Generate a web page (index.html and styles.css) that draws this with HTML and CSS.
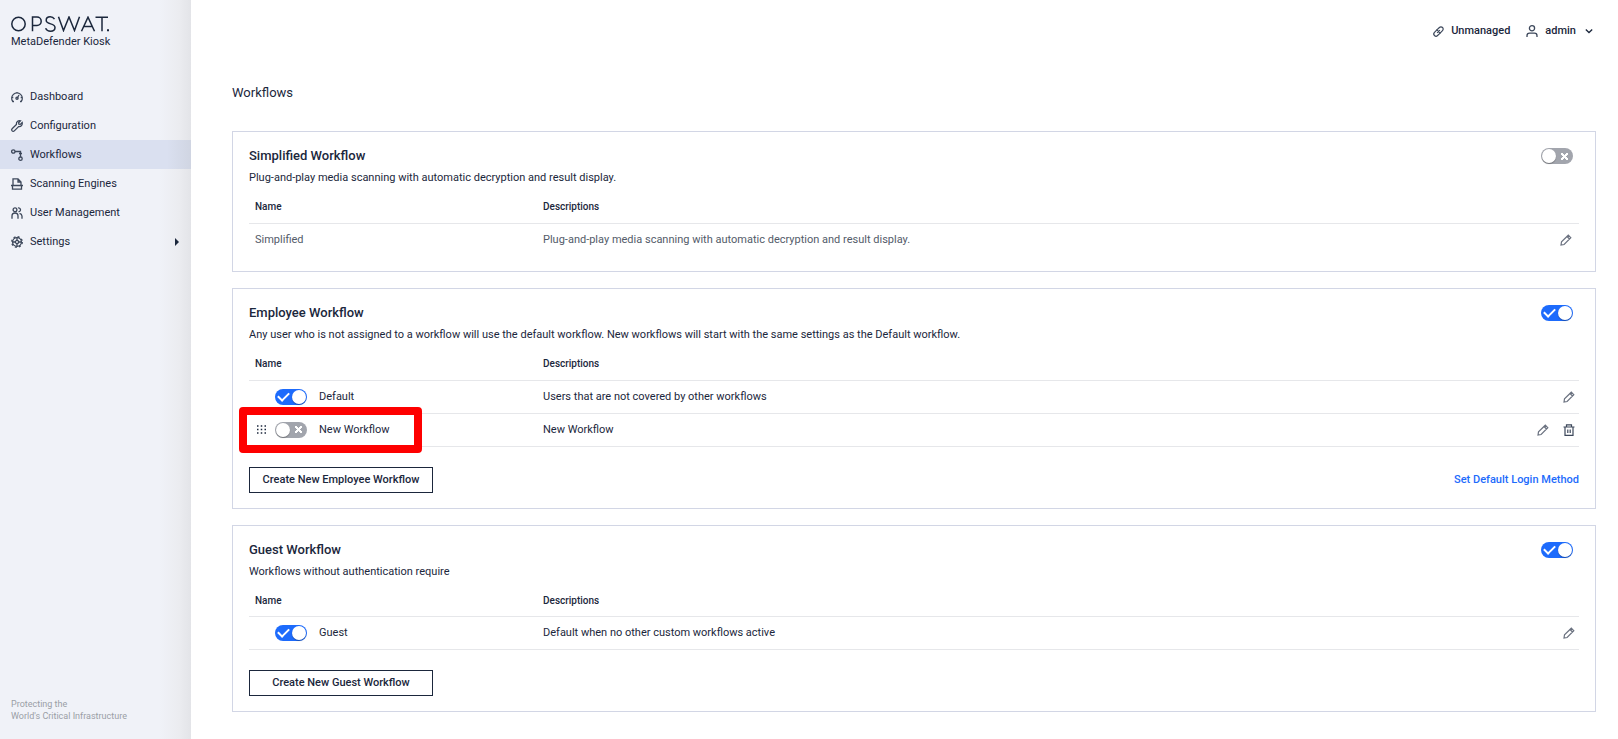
FILE: index.html
```
<!DOCTYPE html>
<html lang="en">
<head>
  <meta charset="UTF-8">
  <title>MetaDefender Kiosk - Workflows</title>
  <link rel="stylesheet" href="styles.css">
</head>
<body>

<!-- shared icons -->
<svg class="sprite" aria-hidden="true">
  <symbol id="i-edit" viewBox="0 0 12 12">
    <path d="M1 11l.5-3.200L8.300 1.200l2.500 2.500L4.100 10.500zM7 2.500L9.500 5"/>
  </symbol>
  <symbol id="i-trash" viewBox="0 0 12 12">
    <path d="M.5 3h11M3.500 3V.800h5V3M2 3v8.400h8V3M4.800 5.500v3.600M7.200 5.500v3.600"/>
  </symbol>
</svg>

<div class="layout">
  <aside class="sidebar">
    <div class="brand">
      <svg class="logo" viewBox="0 0 98 16" role="img" aria-label="OPSWAT.">
        <circle cx="7.500" cy="8" r="6.700"/>
        <path d="M21.500 15.300V1h4.500a4.200 4.200 0 0 1 0 8.400h-4.500"/>
        <path d="M43.500 3.200C42.500 1.600 41 .8 39.200.8c-2.400 0-4 1.400-4 3.400 0 4.800 8.800 2.600 8.800 7.300 0 2.300-1.900 3.700-4.500 3.700-2.100 0-4-1-4.900-3"/>
        <path d="M47.500.7l5 13.800L58 1l5.500 13.500L68.500.7"/>
        <path d="M70.500 15.300L77 1.200l6.500 14.100M73 10.500h8"/>
        <path d="M84.500 1.200H97M91 1.200v14.100"/>
        <path d="M96 14.300h2" stroke-width="2"/>
      </svg>
      <div class="product">MetaDefender Kiosk</div>
    </div>

    <nav class="nav">
      <a href="#">
        <svg class="icon" viewBox="0 0 12 12"><path d="M3 10.500H1.800A5.300 5.300 0 1 1 10.200 10.500H9M6 7.500L8 4M1 6.500h1.300M9.700 6.500H11M6 1v1.300"/><circle cx="6" cy="7.300" r="1.100"/></svg>
        Dashboard
      </a>
      <a href="#">
        <svg class="icon" viewBox="0 0 12 12"><path d="M9.500.8L7.600 2.700l.3 1.400 1.400.3 1.900-1.900c.5 1.900-.7 4.400-3.600 4.100L3.300 10.900a1.500 1.500 0 0 1-2.200-2.200L5.400 4.400C5.100 1.500 7.600.3 9.500.8z"/></svg>
        Configuration
      </a>
      <a href="#" class="active">
        <svg class="icon" viewBox="0 0 12 12"><circle cx="2.300" cy="2.500" r="1.700"/><circle cx="9.500" cy="9.700" r="1.700"/><path d="M4 2.500h5.500V8M8 4.500h3"/></svg>
        Workflows
      </a>
      <a href="#">
        <svg class="icon" viewBox="0 0 12 12"><path d="M2 7V.8h5L10 4v3M7 .8V4h3M0 7.500h12M1.500 7.500v3.700h9V7.500"/></svg>
        Scanning Engines
      </a>
      <a href="#">
        <svg class="icon" viewBox="0 0 12 12"><circle cx="4" cy="2.800" r="1.900"/><path d="M1 11.800V9a3 3 0 0 1 6 0v2.800M7 1a1.900 1.900 0 1 1 .5 3.700M8.500 6.300A3 3 0 0 1 11 9v2.800"/></svg>
        User Management
      </a>
      <a href="#">
        <svg class="icon" viewBox="0 0 12 12"><circle cx="6" cy="6" r="4.400"/><circle cx="6" cy="6" r="1.600"/><circle cx="6" cy="6" r="5.300" stroke-dasharray="2 2.160"/><path d="M6 1.600v2.800M6 7.600v2.800M1.600 6h2.800M7.600 6h2.800"/></svg>
        Settings
        <span class="caret"></span>
      </a>
    </nav>

    <footer class="tagline">Protecting the<br>World's Critical Infrastructure</footer>
  </aside>

  <main class="content">
    <header class="topbar">
      <a href="#">
        <svg class="icon small" viewBox="0 0 12 12"><path d="M4.500 4L7 1.600a2.400 2.400 0 0 1 3.400 3.400L8 7.500M7.500 8L5 10.400A2.400 2.400 0 0 1 1.600 7L4 4.500M3.700 3.700l4.600 4.600M4.500 7.500l3-3"/></svg>
        Unmanaged
      </a>
      <button type="button" class="user">
        <svg class="icon" viewBox="0 0 12 12"><circle cx="6" cy="3.200" r="2.600"/><path d="M1 12v-1.300a2.500 2.500 0 0 1 2.500-2.500h5a2.500 2.500 0 0 1 2.500 2.500V12"/></svg>
        admin
        <svg class="chevron" viewBox="0 0 8 8"><path d="M.8 2.500L4 5.500l3.200-3"/></svg>
      </button>
    </header>

    <h1>Workflows</h1>

    <section class="card simplified">
      <div class="card-head">
        <h2>Simplified Workflow</h2>
        <input type="checkbox" class="toggle" aria-label="Simplified Workflow">
      </div>
      <p>Plug-and-play media scanning with automatic decryption and result display.</p>
      <table>
        <thead>
          <tr><th class="name">Name</th><th>Descriptions</th><th class="actions"></th></tr>
        </thead>
        <tbody>
          <tr>
            <td>Simplified</td>
            <td>Plug-and-play media scanning with automatic decryption and result display.</td>
            <td class="actions"><button type="button" aria-label="Edit"><svg class="icon"><use href="#i-edit"/></svg></button></td>
          </tr>
        </tbody>
      </table>
    </section>

    <section class="card">
      <div class="card-head">
        <h2>Employee Workflow</h2>
        <input type="checkbox" class="toggle" aria-label="Employee Workflow" checked>
      </div>
      <p>Any user who is not assigned to a workflow will use the default workflow. New workflows will start with the same settings as the Default workflow.</p>
      <table>
        <thead>
          <tr><th class="name">Name</th><th>Descriptions</th><th class="actions"></th></tr>
        </thead>
        <tbody>
          <tr>
            <td>
              <div class="entry">
                <span class="handle"></span>
                <input type="checkbox" class="toggle" id="wf-default" checked>
                <label for="wf-default">Default</label>
              </div>
            </td>
            <td>Users that are not covered by other workflows</td>
            <td class="actions"><button type="button" aria-label="Edit"><svg class="icon"><use href="#i-edit"/></svg></button></td>
          </tr>
          <tr>
            <td>
              <div class="entry">
                <span class="handle">
                  <svg viewBox="0 0 9 9"><path d="M0 1h9M0 4.500h9M0 8h9"/></svg>
                </span>
                <input type="checkbox" class="toggle" id="wf-new">
                <label for="wf-new">New Workflow</label>
                <span class="marker"></span>
              </div>
            </td>
            <td>New Workflow</td>
            <td class="actions">
              <button type="button" aria-label="Edit"><svg class="icon"><use href="#i-edit"/></svg></button>
              <button type="button" aria-label="Delete"><svg class="icon trash"><use href="#i-trash"/></svg></button>
            </td>
          </tr>
        </tbody>
      </table>
      <div class="card-foot">
        <button type="button" class="create">Create New Employee Workflow</button>
        <a href="#">Set Default Login Method</a>
      </div>
    </section>

    <section class="card">
      <div class="card-head">
        <h2>Guest Workflow</h2>
        <input type="checkbox" class="toggle" aria-label="Guest Workflow" checked>
      </div>
      <p>Workflows without authentication require</p>
      <table>
        <thead>
          <tr><th class="name">Name</th><th>Descriptions</th><th class="actions"></th></tr>
        </thead>
        <tbody>
          <tr>
            <td>
              <div class="entry">
                <span class="handle"></span>
                <input type="checkbox" class="toggle" id="wf-guest" checked>
                <label for="wf-guest">Guest</label>
              </div>
            </td>
            <td>Default when no other custom workflows active</td>
            <td class="actions"><button type="button" aria-label="Edit"><svg class="icon"><use href="#i-edit"/></svg></button></td>
          </tr>
        </tbody>
      </table>
      <div class="card-foot">
        <button type="button" class="create">Create New Guest Workflow</button>
      </div>
    </section>
  </main>
</div>

</body>
</html>
```
FILE: styles.css
```
* { box-sizing: border-box; }
body {
  margin: 0;
  font-family: Roboto, "Liberation Sans", sans-serif;
  font-size: 11px;
  line-height: 16px;
  color: #1b273c;
  background-color: #fff;
}
a { color: inherit; text-decoration: none; }
button {
  font: inherit;
  color: inherit;
  background: none;
  border: none;
  padding: 0;
  cursor: pointer;
}
svg { fill: none; stroke: currentColor; }
.sprite { position: absolute; width: 0; height: 0; }
.icon { display: block; width: 12px; height: 12px; flex: none; overflow: visible; stroke-width: 1.300; }
.icon.small { width: 11px; height: 11px; }

.layout { display: flex; min-height: 100vh; }

/* sidebar */
.sidebar {
  flex: none;
  width: 191px;
  display: flex;
  flex-direction: column;
  background: linear-gradient(to left, #e3e4e8, #ebecf0 12px, #f0f2f8 32px);
}
.brand { padding: 16px 11px 0; height: 82px; }
.logo { display: block; width: 98px; height: 16px; stroke-width: 1.500; }
.product { font-size: 11px; line-height: 19px; }
.nav a {
  display: flex;
  align-items: center;
  gap: 7px;
  height: 29px;
  padding: 0 12px 0 11px;
}
.nav a.active { background: linear-gradient(to left, #d0d5e2, #dae0f0 24px); }
.nav .icon { color: #3d485b; }
.caret {
  margin-left: auto;
  border: 4px solid transparent;
  border-left-color: #1b273c;
  border-right: none;
}
.tagline {
  margin-top: auto;
  padding: 0 11px 17px;
  font-size: 9px;
  line-height: 12px;
  color: #9a9ea6;
}

/* content */
.content { flex: 1; min-width: 0; padding: 23px 22px 0 41px; }
.topbar {
  display: flex;
  justify-content: flex-end;
  gap: 16px;
  font-weight: 500;
}
.topbar a, .user { display: flex; align-items: center; gap: 7px; }
.topbar .icon { color: #3d485b; }
.chevron { width: 8px; height: 8px; margin: 0 3px 0 2px; stroke-width: 1.300; }
h1 { margin: 44px 0 29px; font-size: 13px; line-height: 19px; font-weight: 400; }

.card {
  border: 1px solid #d2d6e5;
  padding: 15px 16px;
  margin-bottom: 16px;
}
.card-head {
  display: flex;
  justify-content: space-between;
  align-items: center;
  padding-right: 6px;
}
h2 { margin: 0; font-size: 13px; line-height: 18px; font-weight: 500; }
.card p { margin: 4px 0 5px; line-height: 18px; }

table { width: 100%; border-collapse: collapse; table-layout: fixed; }
th, td { padding: 0 6px; text-align: left; border-bottom: 1px solid #e6e7ea; }
th { height: 31px; font-size: 10px; font-weight: 500; }
td { height: 33px; }
.name { width: 288px; }
.actions { width: 60px; padding: 0 4px; text-align: right; }
.actions button { margin-left: 11px; vertical-align: middle; color: #6b7280; }
.actions .icon { stroke-width: 1.200; }
.actions .trash { color: #3d485b; }
.simplified td { border-bottom: none; color: #535b69; }
.simplified .actions { padding-right: 7px; }

.entry { position: relative; display: flex; align-items: center; }
.handle { width: 20px; padding-left: 2px; }
.handle svg { display: block; width: 9px; height: 9px; stroke-width: 1.500; stroke-dasharray: 1.500 2.250; }
.entry label { margin-left: 12px; }
.marker {
  position: absolute;
  left: -16px;
  top: -15px;
  width: 183px;
  height: 46px;
  border: 8px solid #fe0000;
  border-radius: 4px;
  pointer-events: none;
}

.toggle {
  appearance: none;
  flex: none;
  display: flex;
  align-items: center;
  justify-content: space-between;
  width: 32px;
  height: 16px;
  margin: 0;
  padding: 0 1px;
  border-radius: 8px;
  background-color: #a2a5ad;
  cursor: pointer;
}
.toggle::before {
  content: "";
  width: 14px;
  height: 14px;
  border-radius: 50%;
  background-color: #fff;
  box-shadow: 0 1px 1px rgba(0,0,0,0.3);
}
.toggle::after {
  content: "";
  width: 7px;
  height: 7px;
  margin-right: 4px;
  background:
    linear-gradient(45deg, transparent 41%, #fff 41%, #fff 59%, transparent 59%),
    linear-gradient(-45deg, transparent 41%, #fff 41%, #fff 59%, transparent 59%);
}
.toggle:checked { flex-direction: row-reverse; background-color: #1d6bfc; }
.toggle:checked::after {
  width: 9px;
  height: 5px;
  margin: 0 0 3px 2px;
  background: none;
  border: solid #fff;
  border-width: 0 0 2px 2px;
  transform: rotate(-45deg);
}

.card-foot {
  display: flex;
  justify-content: space-between;
  align-items: center;
  margin-top: 20px;
  font-weight: 500;
}
.create { min-width: 184px; height: 26px; border: 1px solid #1b273c; font-weight: 500; }
.card-foot a { color: #1d6bfc; }
```
